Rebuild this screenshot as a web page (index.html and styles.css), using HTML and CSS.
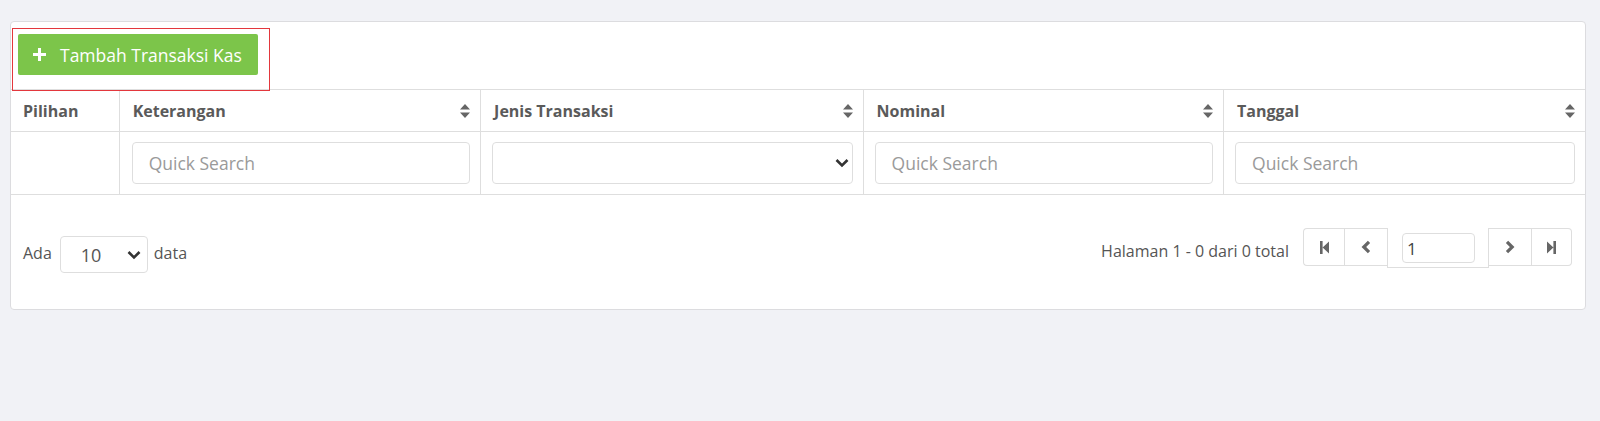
FILE: index.html
```html
<!DOCTYPE html>
<html lang="id">
<head>
<meta charset="utf-8">
<title>Transaksi Kas</title>
<link rel="stylesheet" href="styles.css">
</head>
<body>
<div class="page">
  <div class="card">
    <div class="toolbar">
      <div class="focus-box">
        <button class="btn-add" type="button">
          <svg class="plus" width="13" height="13" viewBox="0 0 13 13"><path d="M5 0h3v5h5v3H8v5H5V8H0V5h5z" fill="#fff"/></svg>
          <span>Tambah Transaksi Kas</span>
        </button>
      </div>
    </div>
    <table class="grid">
      <colgroup>
        <col class="c1"><col class="c2"><col class="c3"><col class="c4"><col class="c5">
      </colgroup>
      <thead>
        <tr class="head">
          <th class="th-plain">Pilihan</th>
          <th><div class="th-in"><span>Keterangan</span><svg class="sort" width="10" height="14" viewBox="0 0 10 14"><path d="M5 0L10 5.5H0z M0 8.5h10L5 14z" fill="#666"/></svg></div></th>
          <th><div class="th-in"><span>Jenis Transaksi</span><svg class="sort" width="10" height="14" viewBox="0 0 10 14"><path d="M5 0L10 5.5H0z M0 8.5h10L5 14z" fill="#666"/></svg></div></th>
          <th><div class="th-in"><span>Nominal</span><svg class="sort" width="10" height="14" viewBox="0 0 10 14"><path d="M5 0L10 5.5H0z M0 8.5h10L5 14z" fill="#666"/></svg></div></th>
          <th><div class="th-in"><span>Tanggal</span><svg class="sort" width="10" height="14" viewBox="0 0 10 14"><path d="M5 0L10 5.5H0z M0 8.5h10L5 14z" fill="#666"/></svg></div></th>
        </tr>
      </thead>
      <tbody>
        <tr class="filter">
          <td></td>
          <td class="f-first"><input class="field" type="text" placeholder="Quick Search"></td>
          <td>
            <div class="select-wrap">
              <select class="field select"><option></option></select>
              <svg class="chev" width="14" height="10" viewBox="0 0 14 10"><path d="M1.5 2l5.5 5.5L12.5 2" fill="none" stroke="#333" stroke-width="2.6"/></svg>
            </div>
          </td>
          <td><input class="field" type="text" placeholder="Quick Search"></td>
          <td><input class="field" type="text" placeholder="Quick Search"></td>
        </tr>
      </tbody>
    </table>
    <div class="footer">
      <div class="left">
        <span class="lbl">Ada</span>
        <div class="select-wrap size-wrap">
          <select class="size"><option>10</option></select>
          <svg class="chev chev-size" width="14" height="10" viewBox="0 0 14 10"><path d="M1.5 2l5.5 5.5L12.5 2" fill="none" stroke="#333" stroke-width="2.6"/></svg>
        </div>
        <span class="lbl">data</span>
      </div>
      <div class="right">
        <span class="info">Halaman 1 - 0 dari 0 total</span>
        <div class="pager">
          <button class="pg pg-first" type="button"><svg width="9" height="13" viewBox="0 0 9 13"><path d="M0 0h2.6v13H0z M2.6 6.5L9 0.5v12z" fill="#666"/></svg></button>
          <button class="pg pg-prev" type="button"><svg width="10" height="14" viewBox="0 0 10 14"><path d="M8 1.8L2.8 7 8 12.2" fill="none" stroke="#666" stroke-width="3.2"/></svg></button>
          <div class="pg-input"><input type="text" value="1"></div>
          <button class="pg pg-next" type="button"><svg width="10" height="14" viewBox="0 0 10 14"><path d="M2 1.8L7.2 7 2 12.2" fill="none" stroke="#666" stroke-width="3.2"/></svg></button>
          <button class="pg pg-last" type="button"><svg width="9" height="13" viewBox="0 0 9 13"><path d="M9 0H6.4v13H9z M6.4 6.5L0 0.5v12z" fill="#666"/></svg></button>
        </div>
      </div>
    </div>
  </div>
</div>
</body>
</html>
```
FILE: styles.css
```css
* { box-sizing: border-box; }
html, body { margin: 0; padding: 0; }
body {
  background: #f1f2f6;
  font-family: "Open Sans", "Noto Sans", sans-serif;
  color: #555;
}
.page { padding: 21px 14px 0 10px; }
.card {
  background: #fff;
  border: 1px solid #dcdcdf;
  border-radius: 4px;
  height: 289px;
  overflow: hidden;
}
.toolbar { padding: 6px 0 0 1px; height: 67px; }
.focus-box {
  width: 258px;
  height: 63px;
  border: 1px solid #e3373d;
  padding: 5px 0 0 5px;
  position: relative;
  z-index: 1;
}
.btn-add {
  display: flex;
  align-items: center;
  width: 240px;
  height: 41px;
  background: #7cc54a;
  border: 0;
  border-radius: 2px;
  color: #fff;
  font-family: inherit;
  font-size: 17.5px;
  padding: 0 0 0 15px;
  cursor: pointer;
}
.btn-add .plus { margin-right: 14px; }
.grid {
  width: 100%;
  border-collapse: collapse;
  table-layout: fixed;
}
.c1 { width: 108px; }
.c2 { width: 361px; }
.c3 { width: 382px; }
.c4 { width: 360px; }
.c5 { width: 361px; }
.grid th, .grid td {
  border: 1px solid #dedede;
}
.grid tr > :first-child { border-left: 0; }
.grid tr > :last-child { border-right: 0; }
.head th {
  height: 42px;
  text-align: left;
  font-size: 16px;
  font-weight: 700;
  color: #5a5a5a;
  padding: 0 10px 0 13px;
}
.head th.th-plain { padding-left: 12px; }
.th-in {
  display: flex;
  align-items: center;
  justify-content: space-between;
}
.filter td {
  height: 63px;
  padding: 0 10px 0 11px;
}
.filter td.f-first { padding-left: 12px; }
.field {
  display: block;
  width: 100%;
  height: 42px;
  border: 1px solid #dedede;
  border-radius: 4px;
  font-family: inherit;
  font-size: 17.5px;
  color: #555;
  padding: 0 16px;
  background: #fff;
  outline: none;
}
.field::placeholder { color: #9a9a9a; }
.select-wrap { position: relative; }
.select { appearance: none; -webkit-appearance: none; }
.chev { position: absolute; right: 4px; top: 50%; margin-top: -5px; pointer-events: none; }
.filter .chev { right: 4px; }
.footer {
  display: flex;
  justify-content: space-between;
  padding: 0 13px 0 12px;
}
.left {
  display: flex;
  align-items: center;
  margin-top: 41px;
  font-size: 16px;
}
.lbl { color: #555; margin-top: -4px; }
.size-wrap { margin: 0 6px 0 8px; }
.size {
  appearance: none;
  -webkit-appearance: none;
  display: block;
  width: 88px;
  height: 37px;
  border: 1px solid #dedede;
  border-radius: 4px;
  background: #fff;
  font-family: inherit;
  font-size: 18px;
  color: #555;
  padding: 0 0 0 20px;
  outline: none;
}
.chev-size { right: 7px; }
.right {
  display: flex;
  align-items: flex-start;
  margin-top: 33px;
}
.info {
  font-size: 16px;
  color: #555;
  margin-top: 12px;
  margin-right: 14px;
}
.pager { display: flex; align-items: flex-start; }
.pg {
  display: flex;
  align-items: center;
  justify-content: center;
  height: 38px;
  background: #fff;
  border: 1px solid #dedede;
  padding: 0;
  cursor: pointer;
}
.pg-first { width: 41px; border-radius: 4px 0 0 4px; border-right: 0; }
.pg-prev { width: 43px; border-right: 0; }
.pg-next { width: 43px; border-left: 0; }
.pg-last { width: 40px; border-radius: 0 4px 4px 0; border-left: 0; }
.pg-input {
  width: 102px;
  height: 40px;
  border: 1px solid #dedede;
  border-top: 0;
  background: #fff;
  padding: 5px 0 0 14px;
}
.pg-input input {
  width: 73px;
  height: 30px;
  border: 1px solid #dedede;
  border-radius: 4px;
  font-family: inherit;
  font-size: 17px;
  color: #444;
  padding: 0 4px;
  outline: none;
}
```
